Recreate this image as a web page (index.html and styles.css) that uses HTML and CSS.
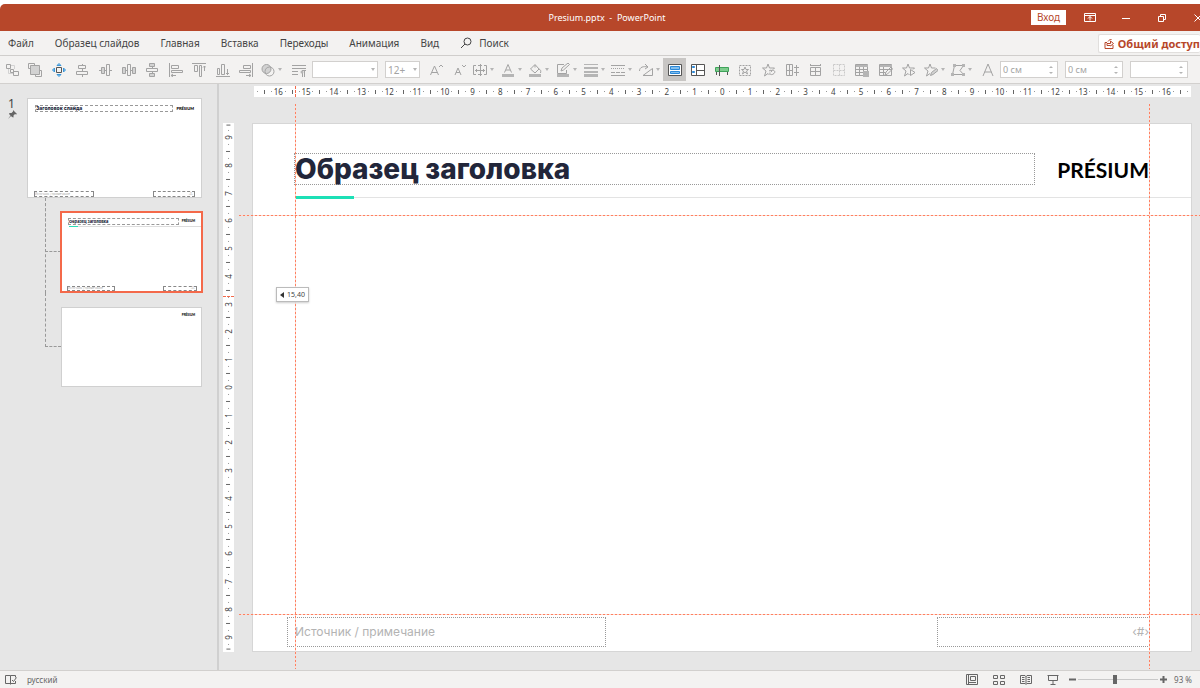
FILE: index.html
```
<!DOCTYPE html>
<html lang="ru">
<head>
    <meta charset="UTF-8">
    <meta name="viewport" content="width=device-width, initial-scale=1.0">
    <title>Presium.pptx - PowerPoint</title>
    <link rel="stylesheet" href="styles.css">
</head>
<body>
    <header class="titlebar">
        <h1 class="doc-title">Presium.pptx&nbsp; - &nbsp;PowerPoint</h1>
        <div class="window-controls">
            <button class="login">Вход</button>
            <button class="win-btn" aria-label="Параметры ленты"><svg width="12" height="10" viewBox="0 0 12 10"><path d="M.5.5h11v8H.5zM.5 2.5h11M6 7.5v-4M4 5.5l2-2 2 2"/></svg></button>
            <button class="win-btn" aria-label="Свернуть"><svg width="10" height="10" viewBox="0 0 10 10"><path d="M1 5.5h8"/></svg></button>
            <button class="win-btn" aria-label="Восстановить"><svg width="10" height="10" viewBox="0 0 10 10"><path d="M1.5 3.5h5v5h-5zM3.500 3V1.500h5v5H7"/></svg></button>
            <button class="win-btn" aria-label="Закрыть"><svg width="10" height="10" viewBox="0 0 10 10"><path d="M1.500 1.500l7 7M8.500 1.500l-7 7"/></svg></button>
        </div>
    </header>

    <nav class="menu">
        <a href="#">Файл</a>
        <a href="#">Образец слайдов</a>
        <a href="#">Главная</a>
        <a href="#">Вставка</a>
        <a href="#">Переходы</a>
        <a href="#">Анимация</a>
        <a href="#">Вид</a>
        <a href="#" class="search"><svg width="12" height="12" viewBox="0 0 12 12"><circle cx="7.500" cy="4.500" r="3.500"/><path d="M5 7L1 11"/></svg>Поиск</a>
        <button class="share"><svg width="11" height="11" viewBox="0 0 11 11"><path d="M3 4.500H1v6h8V7M3 7.500V5.500h3.500V3l3 2.500-3 2.500V7.500zM4 3.500L6.500 1l1 1"/></svg>Общий доступ</button>
    </nav>

    <div class="toolbar">
        <div class="group group-arrange">
            <button aria-label="Группировать"><svg viewBox="0 0 14 14"><path class="soft" d="M6 2.500h3.500V6M3.500 6v4.500H8"/><path d="M1.500 1.500h4v4h-4zM8.500 8.500h5v4h-5zM5.500 6.500h3v3h-3z"/></svg></button>
            <button aria-label="На передний план"><svg viewBox="0 0 14 14"><path d="M2 5.500H.5v-5h6V2M12 7.500h1.500v6h-6V12"/><path class="fill" d="M2.500 2.500h9v9h-9z"/></svg></button>
            <button aria-label="Выровнять"><svg viewBox="0 0 14 14"><path class="dark" d="M4.500 4.500h5v5h-5z"/><path class="blue" d="M5 2.500l2-2 2 2zM5 11.500l2 2 2-2zM2.500 5l-2 2 2 2zM11.500 5l2 2-2 2z"/></svg></button>
            <button aria-label="По центру"><svg viewBox="0 0 14 14"><path d="M7.500 1v2M7.500 6v3M7.500 12v2M3.500 2.500h7v3h-7zM1.500 8.500h11v3h-11z"/></svg></button>
            <button aria-label="По середине"><svg viewBox="0 0 14 14"><path d="M0 7.500h2M5 7.500h2M10 7.500h3M7.500 1.500h3v11h-3z"/><path class="fill" d="M2.500 4.500h3v6h-3z"/></svg></button>
            <button aria-label="Распределить по горизонтали"><svg viewBox="0 0 14 14"><path d="M3 7.500h2M8 7.500h2M5.500 1.500h3v11h-3z"/><path class="fill" d="M.5 4.500h3v6h-3zM10.500 4.500h3v6h-3z"/></svg></button>
            <button aria-label="Распределить по вертикали"><svg viewBox="0 0 14 14"><path d="M7.500 3v3M7.500 9v2M1.500 5.500h11v3h-11z"/><path class="fill" d="M4.500.5h5v3h-5zM4.500 10.500h5v3h-5z"/></svg></button>
            <button aria-label="По левому краю"><svg viewBox="0 0 14 14"><path d="M.5 0v14M2.500 2.500h7v3h-7zM2.500 7.500h11v2h-11zM2 12.500h5M4 11l-2 1.500L4 14"/></svg></button>
            <button aria-label="По верхнему краю"><svg viewBox="0 0 14 14"><path d="M0 .5h14M2.500 2.500h3v6h-3zM7.500 2.500h2v11h-2zM12.500 3v5M11 4.500L12.500 3 14 4.500"/></svg></button>
            <button aria-label="По нижнему краю"><svg viewBox="0 0 14 14"><path d="M0 13.500h14M1.500 5.500h2v6h-2zM5.500 1.500h3v10h-3zM11.500 6v6M10 10l1.500 1.500L13 10"/></svg></button>
            <button aria-label="По правому краю"><svg viewBox="0 0 14 14"><path d="M13.500 0v14M4.500 2.500h7v3h-7zM.5 7.500h11v2H.5zM7 12.500h5M10 11l2 1.500-2 1.500"/></svg></button>
        </div>
        <div class="group group-shape">
            <button class="drop" aria-label="Объединить фигуры"><svg viewBox="0 0 14 14"><circle class="fill" cx="5.500" cy="6" r="4.500"/><circle cx="8.500" cy="8.500" r="4.500"/></svg></button>
            <button aria-label="Абзац"><svg viewBox="0 0 14 14"><path d="M0 2.500h14M0 5.500h14M0 8.500h6M0 11.500h6M10.500 8v6M12.500 8v6M14 7.500h-4"/><circle class="solid" cx="10" cy="9" r="1.500"/></svg></button>
        </div>
        <div class="combo combo-font"><select aria-label="Шрифт"><option></option></select></div>
        <div class="combo combo-size"><select aria-label="Размер шрифта"><option>12+</option></select></div>
        <div class="group group-font">
            <button aria-label="Увеличить размер шрифта"><svg viewBox="0 0 14 14"><path d="M1.500 12L5.500 3l4 9M3 9.500h5M10 4l2-2 2 2"/></svg></button>
            <button aria-label="Уменьшить размер шрифта"><svg viewBox="0 0 14 14"><path d="M3 12l3-7 3 7M4 9.500h4M10 2l2 2 2-2"/></svg></button>
        </div>
        <div class="group group-format">
            <button class="drop" aria-label="Выравнивание текста"><svg viewBox="0 0 14 14"><path d="M3 2.500H.5v9H3M11 2.500h2.500v9H11M2 7.500h10M7.500 1v12M5 2.500h4M5 11.500h4M4 6L2.500 7.500 4 9M10 6l1.500 1.500L10 9"/></svg></button>
            <button class="drop" aria-label="Цвет текста"><svg viewBox="0 0 14 14"><path d="M3.500 9.500L7 1.500l3.500 8M5 7h4"/><path class="bar" d="M1 11h12v3H1z"/></svg></button>
            <button class="drop" aria-label="Заливка фигуры"><svg viewBox="0 0 14 14"><path d="M6.500 2L2.500 6 7 10l4-4-4-4.500v3M11 6c2 1 2 2 1.500 4"/><path class="bar" d="M1 11h12v3H1z"/></svg></button>
            <button class="drop" aria-label="Контур фигуры"><svg viewBox="0 0 14 14"><path d="M8 1.500H1.500v9h9V7M5 8l1-3 6-5 1.500 1.500-6 5.500z"/><path class="bar" d="M1 11h12v3H1z"/></svg></button>
            <button class="drop" aria-label="Толщина"><svg viewBox="0 0 14 14"><path class="bar" d="M0 1h14v1H0zM0 4h14v2H0zM0 8h14v2H0zM0 11h14v3H0z"/></svg></button>
            <button class="drop" aria-label="Штрихи"><svg viewBox="0 0 14 14"><path d="M0 2.500h14M0 12.500h14"/><path stroke-dasharray="1 1" d="M0 5.500h14"/><path stroke-dasharray="4 1" d="M0 9.500h14"/></svg></button>
            <button class="drop" aria-label="Повернуть"><svg viewBox="0 0 14 14"><path d="M4 12.500h9.500v-7zM.5 8c0-4 4-5 8-4M6 1l3 3-3 2"/></svg></button>
        </div>
        <div class="group group-master">
            <button class="active" aria-label="Заголовок и текст"><svg viewBox="0 0 14 14"><path class="dark sheet" d="M.5 1.500h13v11H.5z"/><path class="sky" d="M2.500 3.500h9v3h-9zM2.500 8.500h9v2h-9z"/></svg></button>
            <button aria-label="Макет"><svg viewBox="0 0 14 14"><path class="dark sheet" d="M.5 1.500h13v11H.5zM5.500 1.500v11M5.500 7.500h8"/><path class="sky" d="M1.500 3.500h2v1h-2zM1.500 8.500h2v1h-2z"/></svg></button>
            <button aria-label="Направляющие"><svg viewBox="0 0 14 14"><path class="green" d="M.5 4.500h13v4H.5z"/><path class="dark" d="M4.500 2v11M1.500 9v3M12.500 9v3"/></svg></button>
            <button aria-label="Вставить заполнитель"><svg viewBox="0 0 14 14"><path d="M1.500 2.500h11v10h-11z" stroke-dasharray="2 1"/><path d="M7 4l1 2.500h2.500l-2 1.500 1 3L7 9l-2.500 2 1-3-2-1.500H6z"/></svg></button>
            <button aria-label="Добавить анимацию"><svg viewBox="0 0 14 14"><path d="M7.500 12L6 10.500 2.500 13 4 8 .5 5h4L6 1l1.500 4h5L11 6.500"/><path d="M9 7.500c3-1 5 1 3 3s-5 1-4-1M7 8l2-1 .5 2"/></svg></button>
            <button aria-label="Столбцы"><svg viewBox="0 0 14 14"><path d="M1.500 1.500h6v11h-6zM4.500 1.500v11M1.500 7.500h6M9 4.500h5M9 9.500h5M11.500 2v11"/></svg></button>
            <button aria-label="Строки"><svg viewBox="0 0 14 14"><path d="M2.500 4.500h10v8h-10zM2.500 8.500h10M7.500 4v8M2.500 1v2M12.500 1v2M2 2.500h10"/></svg></button>
            <button class="dim" aria-label="Границы"><svg viewBox="0 0 14 14"><path stroke-dasharray="2 1" d="M1.500 1.500h11v11h-11zM1.500 7.500h11M7.500 1.500v11"/></svg></button>
            <button aria-label="Таблица"><svg viewBox="0 0 14 14"><path d="M.5 1.500h12v11H.5zM.5 6.500h12M.5 9.500h12M4.500 3v10M8.500 3v10"/><path class="bar" d="M1 2h12v2H1zM8 8h6v6H8z"/></svg></button>
            <button aria-label="Нарисовать таблицу"><svg viewBox="0 0 14 14"><path d="M.5 1.500h12v11H.5zM.5 6.500h12M.5 9.500h6M4.500 3v10M6 12l1-3 5-5 1.500 2-5 5z"/><path class="bar" d="M1 2h12v2H1z"/></svg></button>
            <button aria-label="Просмотр анимации"><svg viewBox="0 0 14 14"><path d="M7.500 12L6 10.500 2.500 13 4 8 .5 5h4L6 1l1.500 4h5L11 6.500M8.500 6.500l4.500 3-4.500 3z"/></svg></button>
        </div>
        <div class="group group-effects">
            <button class="drop" aria-label="Стили анимации"><svg viewBox="0 0 14 14"><path d="M6 10.500L2.500 13 4 8 .5 5h4L6 1l1.500 4h4"/><path class="fill" d="M6.500 12.500l1-3 5-4 1.500 2-5 4z"/></svg></button>
            <button class="drop" aria-label="Изменить узлы"><svg viewBox="0 0 14 14"><path d="M3.500 2.500h9l-3.500 5 3.500 4H1.500z"/><path class="bar" d="M2 1h3v3H2zM11 1h3v3h-3zM0 10h3v3H0zM11 10h3v3h-3z"/></svg></button>
        </div>
        <button class="letter" aria-label="Формат текста"><svg viewBox="0 0 14 14"><path d="M2 13L7 1l5 12M3.500 9h7"/></svg></button>
        <div class="spin"><input type="text" aria-label="Высота" value="0 см"><svg width="6" height="12" viewBox="0 0 6 12"><path d="M1 4l2-2 2 2zM1 8l2 2 2-2z"/></svg></div>
        <div class="spin"><input type="text" aria-label="Ширина" value="0 см"><svg width="6" height="12" viewBox="0 0 6 12"><path d="M1 4l2-2 2 2zM1 8l2 2 2-2z"/></svg></div>
        <div class="spin"><input type="text" aria-label="Интервал" value=""><svg width="6" height="12" viewBox="0 0 6 12"><path d="M1 4l2-2 2 2zM1 8l2 2 2-2z"/></svg></div>
        <button class="letter" aria-label="Ещё"><svg viewBox="0 0 14 14"><circle cx="9" cy="7" r="5"/></svg></button>
    </div>

    <main class="workspace">
        <aside class="slides">
            <div class="slide-number">
                <span>1</span>
                <svg width="9" height="9" viewBox="0 0 9 9"><path d="M5 0l4 4-1 .5-1-.5-1.500 1.500V7.500L4 7 3 6 0 9l2.500-3.500L1 4l.5-1H3.500L5 1.500z"/></svg>
            </div>
            <div class="tree">
                <div class="thumb thumb-master">
                    <div class="thumb-head"><span class="thumb-title">Заголовок слайда</span><span class="thumb-logo">PRÉSIUM</span></div>
                    <div class="thumb-foot"><span>Источник / примечание</span><span>‹#›</span></div>
                </div>
                <div class="branch">
                    <div class="connector"></div>
                    <div class="thumb thumb-layout selected">
                        <div class="thumb-head"><span class="thumb-title">Образец заголовка</span><span class="thumb-logo">PRÉSIUM</span></div>
                        <div class="thumb-rule"></div>
                        <div class="thumb-foot"><span>Источник / примечание</span><span>‹#›</span></div>
                    </div>
                </div>
                <div class="branch last">
                    <div class="connector"></div>
                    <div class="thumb thumb-layout">
                        <div class="thumb-head"><span class="thumb-logo">PRÉSIUM</span></div>
                    </div>
                </div>
            </div>
        </aside>

        <section class="editor">
            <div class="ruler ruler-x" data-range="67"></div>
            <div class="ruler ruler-y" data-range="38"></div>
            <article class="slide">
                <div class="slide-head">
                    <h2 class="slide-title">Образец заголовка</h2>
                    <span class="logo">PRÉSIUM</span>
                </div>
                <div class="slide-rule"></div>
                <div class="slide-foot">
                    <p class="source">Источник / примечание</p>
                    <p class="page">‹#›</p>
                </div>
                <div class="guide guide-v guide-left"></div>
                <div class="guide guide-v guide-right"></div>
                <div class="guide guide-h guide-top"></div>
                <div class="guide guide-h guide-bottom"></div>
                <div class="guide-tip"><svg width="4" height="6" viewBox="0 0 4 6"><path d="M4 0v6L0 3z"/></svg>15,40</div>
            </article>
        </section>
    </main>

    <footer class="status">
        <svg class="book" width="12" height="11" viewBox="0 0 12 11"><path d="M5.500 9.500h-5v-8h5v9M5.500 1.500h5v2M5.500 9.500h5V7M7 6l1.500 1.500 3-4"/></svg>
        <span class="lang">русский</span>
        <div class="views">
            <button aria-label="Обычный"><svg width="12" height="11" viewBox="0 0 12 11"><path d="M.5.5h11v10H.5zM2.500 1v9M4.500 2.500h5v4h-5zM3 8.500h7"/></svg></button>
            <button aria-label="Сортировщик"><svg width="12" height="11" viewBox="0 0 12 11"><path d="M.5 1.500h4v3h-4zM7.500 1.500h4v3h-4zM.5 7.500h4v3h-4zM7.500 7.500h4v3h-4z"/></svg></button>
            <button aria-label="Чтение"><svg width="12" height="11" viewBox="0 0 12 11"><path d="M.5 1.500H5l1 1 1-1h4.500v8H7l-1 1-1-1H.5zM6 2v8M2 3.500h2.500M2 5.500h2.500M2 7.500h2.500M7.500 3.500H10M7.500 5.500H10M7.500 7.500H10"/></svg></button>
            <button aria-label="Показ слайдов"><svg width="12" height="11" viewBox="0 0 12 11"><path d="M.5 1.500h11M1.500 1.500v5h9v-5M6 6.500v4M3.500 10.500h5"/></svg></button>
        </div>
        <div class="zoom">
            <button aria-label="Уменьшить"><svg width="7" height="7" viewBox="0 0 7 7"><path d="M0 3.500h7"/></svg></button>
            <input type="range" id="zoom" min="0" max="100" value="46" aria-label="Масштаб">
            <button aria-label="Увеличить"><svg width="7" height="7" viewBox="0 0 7 7"><path d="M0 3.500h7M3.500 0v7"/></svg></button>
            <label for="zoom">93 %</label>
        </div>
    </footer>

    <script>
        // four marks per centimetre: number, dot, half tick, dot
        document.querySelectorAll('.ruler').forEach(ruler => {
            const range = Number(ruler.dataset.range);
            for (let i = -range; i <= range; i++) {
                const mark = document.createElement('span');
                if (i % 4 === 0) {
                    mark.textContent = Math.abs(i / 4);
                } else {
                    mark.className = i % 2 === 0 ? 'tick' : 'dot';
                }
                ruler.appendChild(mark);
            }
        });
    </script>
</body>
</html>
```

FILE: styles.css
```
* {
    box-sizing: border-box;
}

body {
    margin: 0;
    padding-top: 4px;
    height: 100vh;
    display: flex;
    flex-direction: column;
    overflow: hidden;
    font-family: "Noto Sans", "Open Sans", sans-serif;
    font-size: 10px;
    color: #444;
    background-color: #fff;
}

button, input, select {
    font: inherit;
    color: inherit;
    margin: 0;
    padding: 0;
    border: none;
    background: none;
}

svg {
    display: block;
    flex: none;
    fill: none;
    stroke: currentColor;
}

/* title bar */
.titlebar {
    flex: none;
    height: 27px;
    display: grid;
    grid-template-columns: 1fr auto 1fr;
    align-items: center;
    background-color: #b7472a;
    border-radius: 5px 0 0 0;
    color: #fff;
}

.doc-title {
    grid-column: 2;
    margin: 0 0 0 14px;
    font-size: 9px;
    font-weight: 400;
}

.window-controls {
    display: flex;
    justify-content: flex-end;
    align-items: center;
    margin-right: -16px;
}

.login {
    width: 35px;
    height: 15px;
    margin-right: 6px;
    background-color: #fff;
    color: #b7472a;
    line-height: 15px;
}

.win-btn {
    width: 36px;
    height: 27px;
    display: flex;
    align-items: center;
    justify-content: center;
}

/* menu */
.menu {
    flex: none;
    height: 25px;
    display: flex;
    align-items: center;
    gap: 21px;
    padding-left: 8px;
    background-color: #f3f2f1;
    border-bottom: 1px solid #d2d0ce;
}

.menu a {
    color: #444;
    text-decoration: none;
    white-space: nowrap;
}

.menu .search {
    display: flex;
    align-items: center;
    gap: 7px;
}

.share {
    display: flex;
    align-items: center;
    gap: 3px;
    height: 19px;
    margin-left: auto;
    padding: 0 0 0 5px;
    background-color: #fff;
    border: 1px solid #e1dfdd;
    border-right: none;
    border-radius: 2px;
    color: #b7472a;
    font-size: 11px;
    font-weight: 700;
    white-space: nowrap;
}

/* toolbar */
.toolbar {
    flex: none;
    height: 28px;
    display: flex;
    align-items: center;
    background-color: #f3f2f1;
    border-bottom: 1px solid #d2d0ce;
    box-shadow: 0 1px 2px #bbb;
    color: #a3a3a3;
    overflow: hidden;
}

.group {
    flex: none;
    display: flex;
}

.group button {
    flex: 1;
    height: 23px;
    display: flex;
    align-items: center;
    justify-content: center;
}

.toolbar button svg {
    width: 14px;
    height: 14px;
}

.group-arrange {
    width: 258px;
}

.group-shape {
    width: 54px;
}

.group-font {
    width: 46px;
    margin-left: 4px;
}

.group-format {
    width: 193px;
}

.group-master {
    width: 258px;
}

.group-effects {
    width: 54px;
}

.group .drop {
    gap: 3px;
}

.drop::after,
.combo::after {
    content: "";
    border: 2px solid transparent;
    border-top: 3px solid #b5b5b5;
    border-bottom: none;
}

.group .active {
    background-color: #c8c6c4;
}

.dim {
    opacity: 0.5;
}

.letter {
    flex: none;
    width: 25px;
    display: flex;
    justify-content: center;
}

.fill {
    fill: #d2d2d2;
}

.soft {
    stroke: #d2d2d2;
}

.solid,
.bar {
    fill: #b5b5b5;
    stroke: none;
}

.dark {
    stroke: #555;
}

.sheet {
    fill: #fff;
}

.blue {
    fill: #8fc4ea;
    stroke: #3a96d8;
}

.sky {
    fill: #83beec;
    stroke: #2b88d8;
}

.green {
    fill: #7dcb8c;
    stroke: #3fa35a;
}

.combo,
.spin {
    flex: none;
    height: 17px;
    display: flex;
    align-items: center;
    background-color: #fff;
    border: 1px solid #d2d0ce;
}

.combo {
    padding-right: 2px;
}

.combo select {
    flex: 1;
    min-width: 0;
    height: 15px;
    padding-left: 2px;
    appearance: none;
}

.combo-font {
    width: 66px;
}

.combo-size {
    width: 35px;
    margin-left: 7px;
}

.spin {
    width: 58px;
    margin-right: 7px;
    padding: 0 3px 0 2px;
}

.spin input {
    flex: 1;
    min-width: 0;
    height: 15px;
    font-size: 9px;
}

.spin svg {
    fill: #b5b5b5;
    stroke: none;
}

/* slide list */
.workspace {
    flex: 1;
    min-height: 0;
    display: flex;
    background-color: #e6e6e6;
}

.slides {
    flex: none;
    width: 219px;
    display: flex;
    padding: 14px 0 0 8px;
    border-right: 2px solid #d0d0d0;
}

.slide-number {
    width: 19px;
    font-size: 12px;
    line-height: 12px;
}

.slide-number svg {
    fill: #666;
    stroke: none;
}

.thumb {
    display: flex;
    flex-direction: column;
    background-color: #fff;
    border: 1px solid #d0d0d0;
    color: #22263a;
    font-family: Inter, sans-serif;
    font-size: 5px;
    line-height: 5px;
}

.thumb-master {
    width: 175px;
    height: 100px;
}

.thumb-layout {
    width: 141px;
    height: 80px;
    margin-top: 14px;
}

.thumb.selected {
    width: 143px;
    height: 82px;
    margin-top: 13px;
    margin-left: -1px;
    border: 2px solid #f4694a;
}

.thumb-head {
    display: flex;
    align-items: center;
    gap: 3px;
    padding: 6px 7px 0 7px;
}

.thumb-title {
    flex: 1;
    height: 7px;
    border: 1px dashed #999;
    font-weight: 800;
}

.thumb-logo {
    margin-left: auto;
    color: #000;
    font-family: Lato, sans-serif;
    font-size: 4px;
    font-weight: 900;
}

.thumb-rule {
    margin: 1px 0 0 7px;
    height: 1px;
    background: linear-gradient(#2ddfb8, #2ddfb8) 0 0 / 9px 1px no-repeat #ddd;
}

.thumb-foot {
    display: flex;
    justify-content: space-between;
    margin-top: auto;
    padding: 0 6px 0 6px;
    color: #aaa;
    font-size: 3px;
    line-height: 4px;
}

.thumb-foot span {
    width: 37%;
    height: 6px;
    border: 1px dashed #888;
}

.thumb-foot span:last-child {
    width: 26%;
    padding-right: 1px;
    text-align: right;
}

.thumb-layout .thumb-head {
    padding: 5px 6px 0 6px;
}

.thumb-layout .thumb-logo {
    font-size: 3px;
}

.thumb-layout .thumb-foot {
    padding: 0 4px 0 5px;
}

.thumb-layout .thumb-foot span {
    height: 5px;
    line-height: 3px;
}

.thumb-layout .thumb-title {
    font-size: 4px;
    line-height: 5px;
}

.branch {
    display: flex;
    margin-left: 18px;
    border-left: 1px dashed #999;
}

.branch.last {
    border-left-color: transparent;
}

.connector {
    flex: none;
    width: 16px;
    height: 54px;
    margin-left: -1px;
    border-left: 1px dashed #999;
    border-bottom: 1px dashed #999;
}

/* canvas */
.editor {
    flex: 1;
    min-width: 0;
    display: grid;
    grid-template-columns: 11px minmax(0, 1fr);
    grid-template-rows: 11px minmax(0, 1fr);
    gap: 26px 18px;
    padding: 2px 8px 18px 4px;
}

.ruler {
    position: relative;
    display: flex;
    background-color: #fff;
    font-size: 8px;
    line-height: 11px;
}

.ruler span {
    flex: 1 1 0;
    min-width: 0;
    min-height: 0;
    display: flex;
    align-items: center;
    justify-content: center;
}

.ruler-x {
    grid-column: 2;
    margin: 0 1px 0 2px;
}

.ruler-y {
    flex-direction: column;
    overflow: hidden;
}

.ruler-y span {
    transform: rotate(-90deg);
}

.ruler-y span:first-child,
.ruler-y span:last-child {
    flex-grow: 0.6;
}

/* pointer position on the rulers */
.ruler::after {
    content: "";
    position: absolute;
}

.ruler-x::after {
    left: 4.4%;
    height: 100%;
    border-left: 1px dashed #f4694a;
}

.ruler-y::after {
    top: 32.7%;
    width: 100%;
    border-top: 1px dashed #f4694a;
}

.tick::before {
    content: "";
    width: 1px;
    height: 4px;
    background-color: #666;
}

.dot::before {
    content: "";
    width: 1px;
    height: 1px;
    background-color: #999;
}

.slide {
    position: relative;
    display: flex;
    flex-direction: column;
    background-color: #fff;
    border: 1px solid #d6d6d6;
    font-family: Inter, sans-serif;
}

.slide-head {
    display: flex;
    align-items: center;
    gap: 22px;
    padding: 29px 42px 0 41px;
}

.slide-title {
    flex: 1;
    height: 32px;
    margin: 0;
    border: 1px dotted #999;
    color: #22263a;
    font-size: 28px;
    font-weight: 800;
    line-height: 30px;
}

.logo {
    color: #000;
    font-family: Lato, sans-serif;
    font-size: 21px;
    font-weight: 700;
}

.slide-rule {
    height: 3px;
    margin: 11px 0 0 42px;
    background:
        linear-gradient(#1de0b6, #1de0b6) 0 0 / 59px 3px no-repeat,
        linear-gradient(#e3e3e3, #e3e3e3) 0 1px / 100% 1px no-repeat;
}

.slide-foot {
    display: flex;
    justify-content: space-between;
    margin-top: auto;
    padding: 0 41px 4px 34px;
    color: #b3b3b3;
    font-size: 12px;
    line-height: 28px;
}

.slide-foot p {
    margin: 0;
    border: 1px dotted #999;
}

.source {
    width: 37%;
    padding-left: 7px;
}

.page {
    width: 213px;
    text-align: right;
}

/* guides */
.guide {
    position: absolute;
}

.guide-v {
    top: -20px;
    bottom: -18px;
    width: 1px;
    background: repeating-linear-gradient(#ff8060 0 2px, #fbd9d0 2px 4px);
}

.guide-h {
    left: -14px;
    right: -10px;
    height: 1px;
    background: repeating-linear-gradient(90deg, #ff8060 0 2px, #fbd9d0 2px 4px);
}

.guide-left {
    left: 4.5%;
}

.guide-right {
    left: 95.5%;
}

.guide-top {
    top: 17.3%;
}

.guide-bottom {
    top: 93%;
}

.guide-tip {
    position: absolute;
    left: 23px;
    top: 31%;
    display: flex;
    align-items: center;
    gap: 3px;
    height: 15px;
    padding: 0 3px;
    background-color: #fff;
    border: 1px solid #bbb;
    box-shadow: 0 1px 2px #ccc;
    font-family: "Noto Sans", sans-serif;
    font-size: 7px;
}

.guide-tip svg {
    fill: #333;
    stroke: none;
}

/* status bar */
.status {
    flex: none;
    height: 18px;
    display: flex;
    align-items: center;
    padding: 0 8px 0 5px;
    background-color: #f3f2f1;
    border-top: 1px solid #d2d0ce;
    font-size: 8px;
    color: #666;
}

.lang {
    margin-left: 10px;
}

.views {
    display: flex;
    gap: 15px;
    margin-left: auto;
}

.zoom {
    display: flex;
    align-items: center;
    margin-left: 10px;
}

.zoom svg {
    stroke-width: 2;
}

.zoom input {
    width: 80px;
    height: 10px;
    margin: 0 2px;
    appearance: none;
    background: linear-gradient(#c8c8c8, #c8c8c8) 0 50% / 100% 1px no-repeat;
}

.zoom input::-webkit-slider-thumb {
    appearance: none;
    width: 4px;
    height: 9px;
    background-color: #666;
}

.zoom label {
    margin-left: 7px;
    white-space: nowrap;
}
```
